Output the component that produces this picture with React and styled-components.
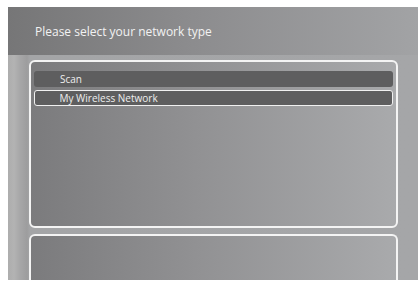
import styled, { createGlobalStyle } from "styled-components";

const Global = createGlobalStyle`
  html, body {
    margin: 0;
    padding: 0;
    background: #fff;
  }
  body {
    font-family: "Open Sans", "Liberation Sans", sans-serif;
  }
`;

// whole tv screen
const Screen = styled.div`
  margin: 7px 0 0 8px;
  width: 410px;
  height: 273px;
  display: flex;
  flex-direction: column;
  overflow: hidden;
`;

const Header = styled.div`
  height: 48px;
  flex: none;
  display: flex;
  align-items: center;
  padding-left: 27px;
  background: linear-gradient(90deg, #767677 0%, #8c8c8e 45%, #a2a3a5 100%);
  color: #f2f2f2;
  font-size: 12px;
`;

const Body = styled.div`
  flex: 1;
  display: flex;
  flex-direction: column;
  gap: 6px;
  padding: 5px 20px 0 21px;
  background: linear-gradient(
    90deg,
    #adadad 0px,
    #b3b3b3 6px,
    #a7a7a8 12px,
    #9d9d9e 19px,
    #a4a5a7 22px,
    #a5a6a8 100%
  );
`;

const Panel = styled.div`
  flex: ${(p) => (p.$grow ? 1 : "none")};
  height: ${(p) => (p.$grow ? "auto" : "168px")};
  box-sizing: border-box;
  border: 2px solid #f4f4f4;
  border-radius: 6px;
  ${(p) => p.$grow && "border-bottom: none; border-bottom-left-radius: 0; border-bottom-right-radius: 0;"}
  background: linear-gradient(90deg, #7b7b7d 0%, #919193 45%, #a9aaac 100%);
  padding: 9px 3px;
  display: flex;
  flex-direction: column;
  gap: 3px;
`;

const Row = styled.div`
  height: 16px;
  box-sizing: border-box;
  border-radius: 3px;
  background: #5e5e5f;
  border: ${(p) => (p.$selected ? "1.5px solid #f0f0f0" : "none")};
  display: flex;
  align-items: center;
  padding-left: ${(p) => (p.$selected ? "24.5px" : "26px")};
  color: #eeeeee;
  font-size: 10px;
`;

export default function App() {
  return (
    <>
      <Global />
      <Screen>
        <Header>Please select your network type</Header>
        <Body>
          <Panel>
            <Row>Scan</Row>
            <Row $selected>My Wireless Network</Row>
          </Panel>
          <Panel $grow />
        </Body>
      </Screen>
    </>
  );
}
